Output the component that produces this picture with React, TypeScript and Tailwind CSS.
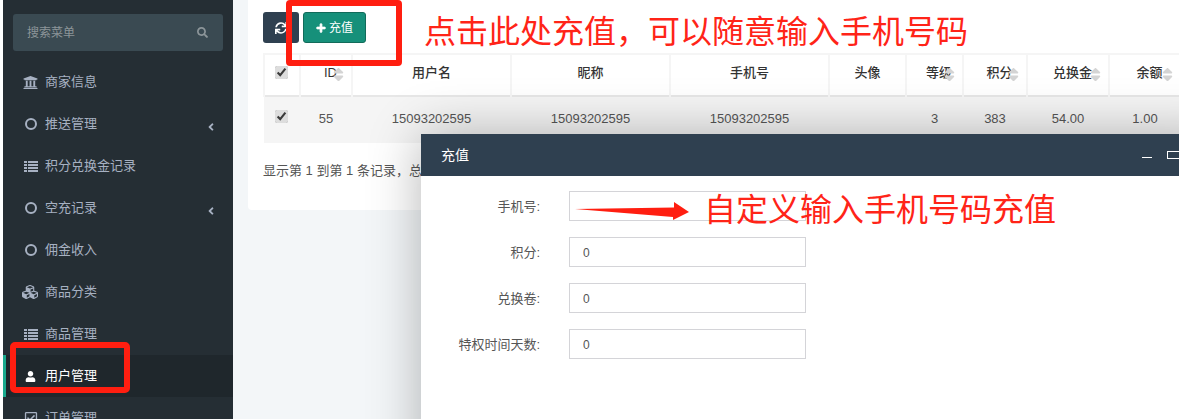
import React from 'react';
import { FaAngleLeft, FaCubes, FaPlus, FaRegCheckSquare, FaSearch, FaSort, FaSync, FaUniversity, FaUser } from 'react-icons/fa';

function ListIcon() {
  return (
    <svg width="14" height="11" viewBox="0 0 14 11" className="ml-[2px]" fill="currentColor">
      {[0, 3, 6, 9].map(y => (
        <g key={y}>
          <rect x="0" y={y} width="3" height="2" />
          <rect x="4" y={y} width="10" height="2" />
        </g>
      ))}
    </svg>
  );
}

function CircleIcon() {
  return <span className="ml-[3px] block h-[12px] w-[12px] rounded-full border-2 border-current" />;
}

const menu = [
  { label: '商家信息', icon: <FaUniversity size={15} className="ml-[1px]" /> },
  { label: '推送管理', icon: <CircleIcon />, arrow: true },
  { label: '积分兑换金记录', icon: <ListIcon /> },
  { label: '空充记录', icon: <CircleIcon />, arrow: true },
  { label: '佣金收入', icon: <CircleIcon /> },
  { label: '商品分类', icon: <FaCubes size={16} /> },
  { label: '商品管理', icon: <ListIcon /> },
  { label: '用户管理', icon: <FaUser size={11} className="ml-[3px]" />, active: true },
  { label: '订单管理', icon: <FaRegCheckSquare size={14} className="ml-[2px]" /> },
];

const columns = [
  { label: 'ID', width: 52, sort: true },
  { label: '用户名', width: 159 },
  { label: '昵称', width: 159 },
  { label: '手机号', width: 159 },
  { label: '头像', width: 77 },
  { label: '等级', width: 57, sort: true },
  { label: '积分', width: 64, sort: true },
  { label: '兑换金', width: 82, sort: true },
  { label: '余额', width: 72, sort: true },
];

const row = ['55', '15093202595', '15093202595', '15093202595', '', '3', '383', '54.00', '1.00'];
const fields = [
  { label: '手机号:', value: '' },
  { label: '积分:', value: '0' },
  { label: '兑换卷:', value: '0' },
  { label: '特权时间天数:', value: '0' },
];

export default function App() {
  return (
    <div className="relative flex h-[419px] w-[1179px] overflow-hidden bg-[#f3f6f8] text-[13px] text-[#676a6c] font-['Liberation_Sans','Noto_Sans_CJK_SC',sans-serif]">
      <div className="w-[3px] shrink-0 bg-white" />
      <aside className="w-[230px] shrink-0 bg-[#252e34] pt-[14px]">
        <div className="mx-[10px] mb-[10px] flex h-[37px] items-center justify-between rounded-[3px] bg-[#3a4a52] pl-[14px] pr-[15px] text-[#8c9599]">
          <span className="text-[12px]">搜索菜单</span>
          <FaSearch size={11} />
        </div>
        <nav>
          {menu.map(item => (
            <div key={item.label} className={`flex h-[42px] items-center border-l-[3px] pl-[16px] pr-[19px] ${item.active ? 'border-[#19aa8d] bg-[#1f272c] text-white' : 'border-transparent text-[#a7b1c2]'}`}>
              <span className="flex w-[20px] shrink-0 justify-start">{item.icon}</span>
              <span className="ml-[3px] flex-1">{item.label}</span>
              {item.arrow && <FaAngleLeft size={12} className="mt-[5px] -mr-[3px]" />}
            </div>
          ))}
        </nav>
      </aside>
      <main className="min-w-0 flex-1 pl-[15px]">
        <div className="h-[210px] overflow-hidden rounded-bl-[4px] bg-white pl-[15px] pt-[12px]">
          <div className="flex gap-[4px]">
            <button type="button" className="flex h-[31px] w-[36px] items-center justify-center rounded-[3px] bg-[#2f4050] text-white"><FaSync size={12} /></button>
            <button type="button" className="flex h-[31px] w-[63px] items-center justify-center gap-[3px] rounded-[3px] border border-[#126b5a] bg-[#16907a] text-[12px] text-white"><FaPlus size={10} stroke="currentColor" strokeWidth={40} />充值</button>
          </div>
          <table className="mt-[10px] w-[908px] table-fixed border-collapse">
            <colgroup>
              <col className="w-[36px]" />
              {columns.map(c => <col key={c.label} style={{ width: c.width }} />)}
            </colgroup>
            <thead>
              <tr className="h-[42px] border-t-2 border-b-2 border-t-[#f5f5f5] border-b-[#e7e7e7] text-[#333]">
                <th className="border-x-2 border-[#f5f5f5]"><input type="checkbox" defaultChecked className="mb-[4px] -ml-[2px] accent-[#dddddd]" /></th>
                {columns.map(c => (
                  <th key={c.label} className={`relative border-r-2 border-[#f5f5f5] pb-[4px] font-medium ${c.sort ? 'pl-[9px]' : ''}`}>
                    {c.label}
                    {c.sort && <FaSort size={17} className="absolute right-[4px] top-[11px] text-[#d4d4d4]" />}
                  </th>
                ))}
              </tr>
            </thead>
            <tbody>
              <tr className="h-[47px] bg-[#f5f5f5] text-[#555]">
                <td className="pb-[3px] text-center"><input type="checkbox" defaultChecked className="mb-[6px] -ml-[2px] accent-[#dddddd]" /></td>
                {row.map((v, i) => <td key={i} className="pb-[3px] text-center">{v}</td>)}
              </tr>
            </tbody>
          </table>
          <p className="mt-[18px] text-[#555]">显示第 1 到第 1 条记录，总共 1 条记录</p>
        </div>
      </main>

      <div className="absolute left-[421px] top-[134px] h-[400px] w-[800px] bg-white shadow-[1px_1px_50px_rgba(0,0,0,0.3)]">
        <div className="flex h-[42px] items-center bg-[#2f4050] pl-[20px] text-[14px] text-white">
          <span className="flex-1">充值</span>
          <span className="absolute left-[721px] top-[23px] h-px w-[10px] bg-white" />
          <span className="absolute left-[746px] top-[17px] h-[8px] w-[14px] border border-white" />
        </div>
        <form className="flex flex-col gap-[16px] pt-[15px]">
          {fields.map(f => (
            <div key={f.label} className="flex items-center">
              <label className="w-[119px] pt-[2px] text-right text-[#555]">{f.label}</label>
              <input type="text" readOnly value={f.value} className="ml-[29px] h-[30px] w-[237px] border border-[#d4d4d8] bg-white pl-[13px] pt-[2px] text-[12px] text-[#555]" />
            </div>
          ))}
        </form>
      </div>

      {/* annotations drawn on the screenshot */}
      <div className="absolute left-[286px] top-0 h-[66px] w-[116px] rounded-[4px] border-[6px] border-[#ff1e10]" />
      <div className="absolute left-[10px] top-[342px] h-[51px] w-[120px] rounded-[5px] border-[6px] border-[#ff1e10]" />
      <div className="absolute left-[424px] top-[9px] text-[32px] leading-[46px] whitespace-nowrap text-[#ff2418]">点击此处充值，可以随意输入手机号码</div>
      <div className="absolute left-[704px] top-[187px] text-[32px] leading-[46px] whitespace-nowrap text-[#ff2418]">自定义输入手机号码充值</div>
      <svg className="absolute left-[574px] top-[202px]" width="118" height="20" viewBox="0 0 118 20">
        <path d="M1 7 L100 5.5 L100 0 L115 10 L99 18 L99 15 Z" fill="#ff1e10" />
      </svg>
    </div>
  );
}
